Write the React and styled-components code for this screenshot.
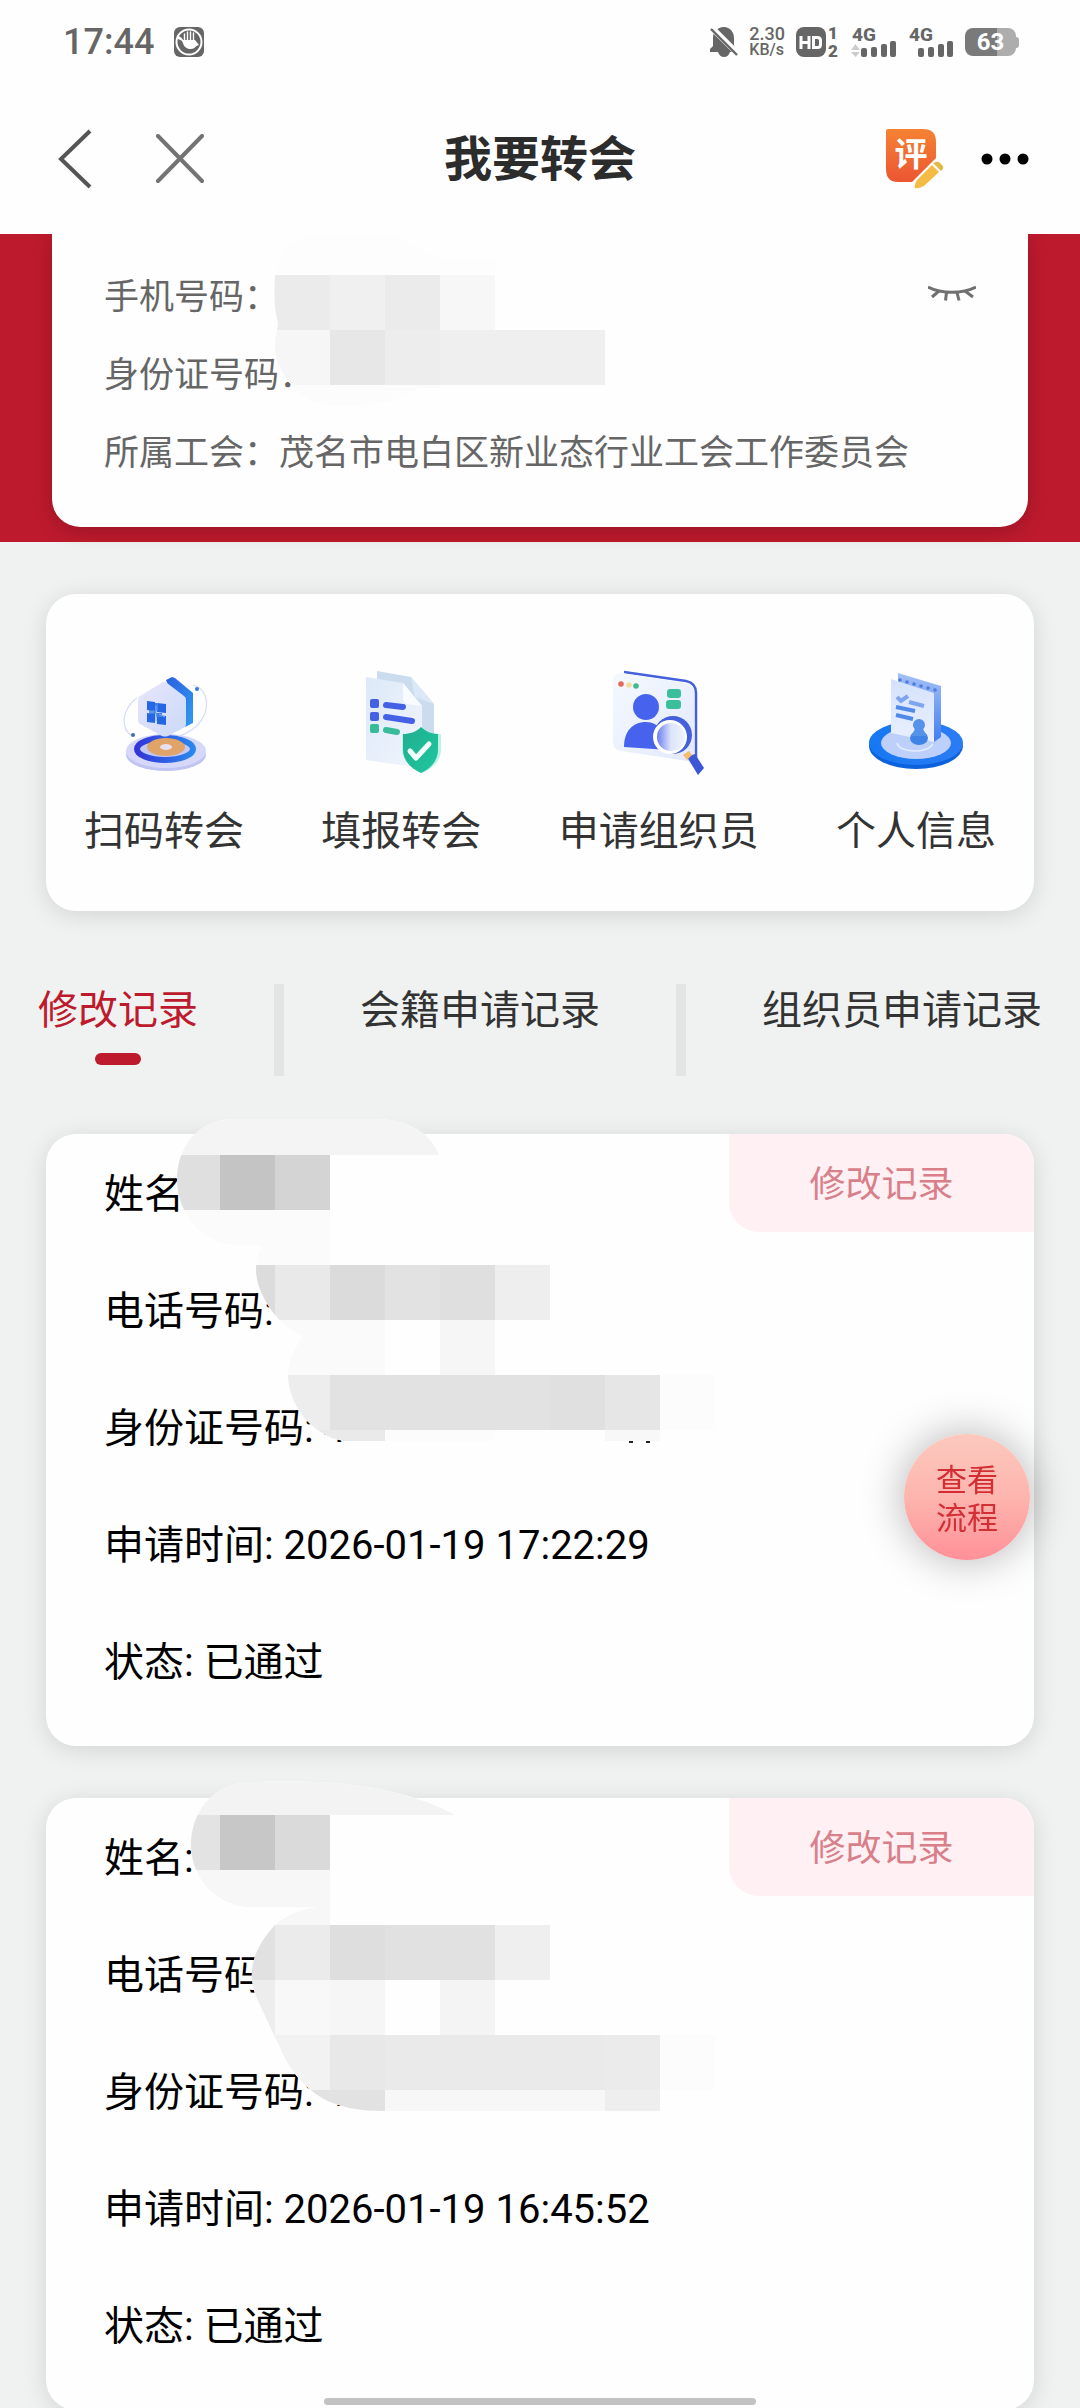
import React, { useState } from "react";
import styled, { createGlobalStyle } from "styled-components";

const colors = {
  brand: "#be1a2d",
  page: "#eff2f1",
  ink: "#333333",
  muted: "#666666",
  status: "#666666",
};

const GlobalStyle = createGlobalStyle`
  * { box-sizing: border-box; }
  body {
    margin: 0;
    background: ${colors.page};
    font-family: Roboto, "Noto Sans CJK SC", sans-serif;
    color: ${colors.ink};
  }
  button {
    font-family: inherit;
    color: inherit;
    background: none;
    border: 0;
    padding: 0;
    cursor: pointer;
  }
  svg { display: block; flex: none; }
`;

const Screen = styled.div`
  display: flex;
  flex-direction: column;
  height: 100vh;
  overflow: hidden;
`;

/* ---------- status bar ---------- */

const StatusBar = styled.div`
  display: flex;
  align-items: center;
  justify-content: space-between;
  flex: none;
  height: 84px;
  padding: 0 61px 0 63px;
  background: #fefefe;
  color: ${colors.status};
`;

const StatusGroup = styled.div`
  display: flex;
  align-items: center;
  gap: ${(p) => p.$gap}px;
`;

const Clock = styled.span`
  font-size: 36px;
  line-height: 44px;
  font-weight: 500;
`;

const NetSpeed = styled.span`
  display: flex;
  flex-direction: column;
  font-weight: 500;
  font-size: 18px;
  line-height: 16px;
  small {
    font-size: 16px;
  }
`;

const Battery = styled.span`
  display: flex;
  align-items: center;
`;

const BatteryBody = styled.span`
  width: 51px;
  height: 28px;
  border-radius: 8px;
  background: linear-gradient(90deg, #7a7a7a 63%, #adadad 63%);
  color: #fff;
  font-size: 24px;
  line-height: 28px;
  font-weight: 700;
  text-align: center;
`;

const BatteryTip = styled.span`
  width: 3px;
  height: 11px;
  border-radius: 0 3px 3px 0;
  background: #adadad;
`;

const PalmIcon = () => (
  <svg width="30" height="30" viewBox="0 0 30 30">
    <rect width="30" height="30" rx="6" fill="#666" />
    <circle cx="15" cy="15" r="12.5" fill="none" stroke="#fff" strokeWidth="2" />
    <path
      d="M10.500 7v9M13.500 5v9M16.500 5v9M19.500 6v9"
      stroke="#fff"
      strokeWidth="1.400"
      strokeLinecap="round"
    />
    <path d="M3 9c3 0 5 2 6 4h12l4 5c-3 0-4 4-8 4-4 0-7-2-8-6-1-3-4-4-6-4z" fill="#fff" />
  </svg>
);

const MutedBellIcon = () => (
  <svg width="28" height="30" viewBox="0 0 28 30">
    <path
      d="M14 0C7 0 3 5 3 11v8l-3 3v3h8c1 3 3 5 6 5s5-2 6-5h5v-4l-1-3v-7C24 5 20 0 14 0z"
      fill="#666"
    />
    <path d="M1 0l27 27" stroke="#fefefe" strokeWidth="6" />
    <path d="M1 2l26 26" stroke="#666" strokeWidth="2.4" />
  </svg>
);

const HdIcon = () => (
  <svg width="44" height="44" viewBox="0 -7 44 44">
    <rect width="30" height="30" rx="8" fill="#666" />
    <g fill="none" stroke="#fff" strokeWidth="3">
      <path d="M5 9v13M13 9v13M5 15.5h8" />
      <path d="M17.500 10.500h4c2 0 3 1 3 3v4c0 2-1 3-3 3h-4z" />
    </g>
    <g fontFamily="Roboto, sans-serif" fontWeight="900" fontSize="17" fill="#666">
      <text x="32" y="12">1</text>
      <text x="32" y="30">2</text>
    </g>
  </svg>
);

const SignalIcon = ({ traffic }) => (
  <svg width="46" height="44" viewBox="0 -7 46 44">
    <text x="1" y="14" fontFamily="Roboto, sans-serif" fontWeight="800" fontSize="19" fill="#666">
      4G
    </text>
    {traffic && <path d="M4.500 17l4.500 6H0zM4.500 30L0 25h9z" fill="#ccc" />}
    <g fill="#666">
      <rect x="10" y="21" width="6" height="9" rx="2" />
      <rect x="20" y="20" width="6" height="10" rx="2" />
      <rect x="30" y="17" width="6" height="13" rx="2" />
      <rect x="39" y="14" width="6" height="16" rx="2" />
    </g>
  </svg>
);

/* ---------- navigation bar ---------- */

const NavBar = styled.header`
  display: grid;
  grid-template-columns: 1fr auto 1fr;
  align-items: center;
  flex: none;
  height: 150px;
  padding: 0 50px;
  background: #fefefe;
`;

const NavSide = styled.div`
  display: flex;
  align-items: center;
  justify-content: ${(p) => (p.$end ? "flex-end" : "flex-start")};
  gap: ${(p) => (p.$end ? 36 : 62)}px;
  padding-left: 6px;
`;

const Title = styled.h1`
  margin: 0;
  font-size: 48px;
  line-height: 60px;
  padding-top: 2px;
  font-weight: 700;
  color: #2c2c2c;
`;

const BackIcon = () => (
  <svg width="36" height="60" viewBox="0 0 36 60" fill="none">
    <path d="M34 2L5 30l29 28" stroke="#555" strokeWidth="4" />
  </svg>
);

const CloseIcon = () => (
  <svg width="50" height="50" viewBox="0 0 50 50" fill="none">
    <path d="M4 2l44 45M48 2L4 47" stroke="#737373" strokeWidth="4" strokeLinecap="round" />
  </svg>
);

const ReviewIcon = () => (
  <svg width="58" height="60" viewBox="0 0 58 60">
    <defs>
      <linearGradient id="review" x1="0" y1="0" x2="0" y2="1">
        <stop offset="0" stopColor="#f58233" />
        <stop offset="1" stopColor="#ec5532" />
      </linearGradient>
    </defs>
    <path d="M0 2q0-2 2-2h35q13 0 13 13v16L26 53H12Q0 53 0 40z" fill="url(#review)" />
    <text
      x="25"
      y="37"
      textAnchor="middle"
      fontFamily='"Noto Sans CJK SC", sans-serif'
      fontWeight="700"
      fontSize="33"
      fill="#fff"
    >
      评
    </text>
    <path d="M46 36l7 7-15 14q-6 3-9 2-1-3 2-8z" fill="#f4bb45" />
    <path d="M47 34l3-1q2-1 4 1l2 2q2 2 1 4l-2 2z" fill="#dfb845" />
  </svg>
);

const MoreIcon = () => (
  <svg width="50" height="20" viewBox="0 0 50 20">
    <circle cx="7" cy="10" r="5.500" />
    <circle cx="25" cy="10" r="5.500" />
    <circle cx="43" cy="10" r="5.500" />
  </svg>
);

/* ---------- content ---------- */

const Content = styled.main`
  flex: 1;
  min-height: 0;
  overflow-y: auto;
  scrollbar-width: none;
`;

const Banner = styled.section`
  padding: 0 52px 15px;
  background: ${colors.brand};
`;

const InfoCard = styled.div`
  position: relative;
  display: flex;
  flex-direction: column;
  gap: 30px;
  padding: 40px 52px 49px;
  border-radius: 0 0 28px 28px;
  background: #fefefe;
  box-shadow: 0 4px 20px rgba(0, 0, 0, 0.2);
`;

const InfoRow = styled.div`
  display: flex;
  align-items: flex-start;
  justify-content: space-between;
  font-size: 35px;
  line-height: 48px;
  color: ${colors.muted};
`;

const ClosedEyeIcon = () => (
  <svg width="48" height="30" viewBox="0 -8 48 30" fill="none" stroke="#707070" strokeWidth="3">
    <path d="M0 5c14 7 34 7 48 0M11 9l-7 6M37 9l8 6M18.500 10.500l-1 8M29 10.500l2 8" />
  </svg>
);

const Card = styled.section`
  position: relative;
  margin: 0 46px;
  border-radius: 30px;
  background: #fefefe;
  box-shadow: 0 4px 24px rgba(0, 0, 0, 0.12);
`;

const ShortcutCard = styled(Card)`
  display: flex;
  justify-content: space-between;
  margin-top: 52px;
  padding: 73px 38px 55px;
`;

const Shortcut = styled.button`
  display: flex;
  flex-direction: column;
  align-items: center;
  gap: 31px;
  font-size: 40px;
  line-height: 48px;
`;

const ScanIcon = () => (
  <svg width="110" height="110" viewBox="0 0 110 110">
    <defs>
      <linearGradient id="scanBack" x1="0" y1="0" x2="1" y2="1">
        <stop offset="0" stopColor="#2b5fe0" />
        <stop offset="1" stopColor="#2f9cf0" />
      </linearGradient>
      <linearGradient id="scanFace" x1="0" y1="0" x2="1" y2="1">
        <stop offset="0" stopColor="#e9e6fc" />
        <stop offset="1" stopColor="#c9d9f8" />
      </linearGradient>
      <linearGradient id="scanRing" x1="0" y1="0" x2="1" y2="0">
        <stop offset="0" stopColor="#3335d8" />
        <stop offset="1" stopColor="#2a86ee" />
      </linearGradient>
    </defs>
    <ellipse cx="57" cy="88" rx="40" ry="16" fill="#bfc4f3" />
    <ellipse cx="57" cy="84" rx="40" ry="17" fill="#d6d8fa" />
    <ellipse cx="56" cy="82" rx="28" ry="11" fill="#c2c9f6" stroke="url(#scanRing)" strokeWidth="6" />
    <ellipse cx="57" cy="80" rx="19" ry="9" fill="#e0a468" />
    <ellipse cx="57" cy="80" rx="6" ry="3" fill="#e8dff2" />
    <path
      d="M28 31C18 38 13 50 16 60c1 4 4 7 8 9M84 18c12 3 16 16 12 28-4 11-14 19-26 23"
      fill="none"
      stroke="#d5dcf6"
      strokeWidth="1.200"
    />
    <circle cx="88" cy="22" r="2" fill="#3a7ad0" />
    <circle cx="24" cy="68" r="2" fill="#3a6ab8" />
    <path d="M57 13l6-3 3 1 18 15v30l-8 4z" fill="url(#scanBack)" />
    <path d="M54 15q2-1 4 1l17 13q2 1 2 4v24q0 3-3 4l-15 8q-3 1-6 0L31 57q-2-1-2-4V33q0-3 2-4z" fill="url(#scanFace)" />
    <path d="M38 34l8 1v9l-8-1zM48 36l9 1v9l-9-1zM38 46l8 1v9l-8-1zM48 48l9 1v9l-9-1z" fill="#2466e6" />
    <path d="M46 36h3v8h-3zM40 43h7v4h-7zM47 46h6v4h-6z" fill="#3f7fe8" />
    <path d="M40 45h5M47 39v15M50 47l6 3" stroke="#7fb0f5" strokeWidth="1" />
  </svg>
);

const ReportIcon = () => (
  <svg width="110" height="110" viewBox="0 0 110 110">
    <defs>
      <linearGradient id="reportPage" x1="0" y1="0" x2="1" y2="1">
        <stop offset="0" stopColor="#dde9f8" />
        <stop offset="1" stopColor="#f1f5fd" />
      </linearGradient>
      <linearGradient id="reportShield" x1="0" y1="0" x2="1" y2="1">
        <stop offset="0" stopColor="#1fae8f" />
        <stop offset="1" stopColor="#1fc79f" />
      </linearGradient>
    </defs>
    <path d="M31 4l34 6 23 27v44l-57-9z" fill="#cbdcef" />
    <path d="M65 10l4 20 19 7z" fill="#dbe8f7" />
    <path d="M20 10l37 6 19 23v62l-56-8z" fill="url(#reportPage)" />
    <path d="M57 16v16q0 4 4 5l15 2z" fill="#f8fbff" />
    <g fill="#4461e6">
      <rect x="24" y="32" width="9" height="9" rx="2" />
      <rect x="24" y="45" width="9" height="9" rx="2" />
    </g>
    <rect x="24" y="57" width="9" height="9" rx="2" fill="#37bb99" />
    <g strokeWidth="6" strokeLinecap="round">
      <path d="M40 38l17 2M40 50l26 4" stroke="#4461e6" />
      <path d="M40 63l11 2" stroke="#37bb99" />
    </g>
    <path d="M76 60c6 5 12 7 19 7v16c0 11-9 19-19 23-10-4-20-12-20-23V67c8 0 14-2 20-7z" fill="#bdf3e5" />
    <path d="M75 60c6 5 11 7 17 7v16c0 11-8 19-17 23-9-4-18-12-18-23V67c7 0 13-2 18-7z" fill="url(#reportShield)" />
    <path d="M64 84l6 7 13-14" fill="none" stroke="#f3fffb" strokeWidth="5" strokeLinecap="round" strokeLinejoin="round" />
  </svg>
);

const OrganizerIcon = () => (
  <svg width="110" height="110" viewBox="0 0 110 110">
    <defs>
      <linearGradient id="orgPanel" x1="0" y1="0" x2="1" y2="1">
        <stop offset="0" stopColor="#f4f9ff" />
        <stop offset="1" stopColor="#e3e9fb" />
      </linearGradient>
      <linearGradient id="orgLens" x1="0" y1="0" x2="1" y2="0">
        <stop offset="0" stopColor="#6b7df0" />
        <stop offset="0.500" stopColor="#dde5fb" />
        <stop offset="1" stopColor="#eef3ff" />
      </linearGradient>
    </defs>
    <path d="M20 5l62 9q10 2 10 12v66" fill="none" stroke="#4560dc" strokeWidth="2.500" />
    <path d="M9 13q0-7 8-7l64 10q9 2 9 10v69L17 84q-8-1-8-9z" fill="url(#orgPanel)" />
    <circle cx="17" cy="17" r="2.800" fill="#e5685c" />
    <circle cx="25" cy="18" r="2.800" fill="#f5dc98" />
    <circle cx="32" cy="19" r="2.800" fill="#42b98e" />
    <rect x="63" y="22" width="14" height="9" rx="3" fill="#3abf9a" />
    <rect x="62" y="33" width="15" height="9" rx="3" fill="#3abf9a" />
    <circle cx="42" cy="40" r="13" fill="#4763ee" />
    <path d="M20 80c0-15 8-25 22-25 13 0 22 12 23 28z" fill="#4763ee" />
    <path d="M83 90l8-3 9 14-6 7z" fill="#3c56d8" />
    <path d="M79 88l6-4 3 4-5 5z" fill="#f3bd6a" />
    <circle cx="69" cy="68" r="19" fill="#4560dc" />
    <circle cx="66" cy="70" r="17" fill="#fff" />
    <circle cx="67" cy="70" r="14" fill="url(#orgLens)" />
  </svg>
);

const ProfileIcon = () => (
  <svg width="110" height="110" viewBox="0 0 110 110">
    <defs>
      <linearGradient id="proDisc" x1="0" y1="0" x2="1" y2="0">
        <stop offset="0" stopColor="#1578f2" />
        <stop offset="1" stopColor="#2b7cf5" />
      </linearGradient>
      <linearGradient id="proSide" x1="0" y1="0" x2="0" y2="1">
        <stop offset="0" stopColor="#a5c0f6" />
        <stop offset="1" stopColor="#3f7df0" />
      </linearGradient>
      <linearGradient id="proPage" x1="0" y1="0" x2="0" y2="1">
        <stop offset="0" stopColor="#d5e2fc" />
        <stop offset="1" stopColor="#eaf0ff" />
      </linearGradient>
    </defs>
    <ellipse cx="55" cy="79" rx="47" ry="23" fill="#0d62dc" />
    <ellipse cx="55" cy="76" rx="47" ry="22" fill="url(#proDisc)" />
    <ellipse cx="55" cy="76" rx="35" ry="16" fill="#bcd0fb" />
    <path d="M36 76c2 10 30 11 36 1" fill="none" stroke="#e4ecff" strokeWidth="1.500" />
    <path d="M37 6l43 13v51l-7 5-36-40z" fill="url(#proSide)" />
    <path d="M30 12l43 14v49l-43-9z" fill="url(#proPage)" />
    <g fill="#4a7ddc">
      <circle cx="39" cy="13" r="1.800" />
      <circle cx="46" cy="15" r="1.800" />
      <circle cx="53" cy="17" r="1.800" />
      <circle cx="60" cy="19" r="1.800" />
      <circle cx="67" cy="21" r="1.800" />
      <circle cx="74" cy="23" r="1.800" />
    </g>
    <g fill="none" stroke="#7ea6ee" strokeWidth="4">
      <path d="M36 30l4 4 7-5" />
      <path d="M48 35l15 4" />
      <path d="M35 40l19 4M35 48l17 4" stroke="#4f8ae8" />
    </g>
    <ellipse cx="58" cy="71" rx="9" ry="7" fill="#3f83e6" />
    <path d="M54 62h8l4 7H50z" fill="#5592ea" />
    <circle cx="58" cy="58" r="6" fill="#5592ea" />
  </svg>
);

/* ---------- tabs ---------- */

const Tabs = styled.nav`
  display: flex;
  align-items: flex-start;
  justify-content: space-between;
  margin: 73px 38px 58px;
`;

const Tab = styled.button`
  display: flex;
  flex-direction: column;
  align-items: center;
  gap: 16px;
  font-size: 40px;
  line-height: 53px;
  white-space: nowrap;
  color: ${(p) => (p.$active ? colors.brand : colors.ink)};
  &::after {
    content: "";
    width: 46px;
    height: 12px;
    border-radius: 6px;
    background: ${(p) => (p.$active ? colors.brand : "transparent")};
  }
`;

const Divider = styled.span`
  width: 10px;
  height: 92px;
  background: #e4e4e4;
`;

/* ---------- records ---------- */

const RecordList = styled.div`
  display: flex;
  flex-direction: column;
  gap: 52px;
`;

const RecordCard = styled(Card)`
  display: flex;
  flex-direction: column;
  gap: 59px;
  padding: 32px 58px 54px;
  font-size: 40px;
  line-height: 58px;
  color: #000;
`;

const RecordTag = styled.span`
  position: absolute;
  top: 0;
  right: 0;
  width: 305px;
  height: 98px;
  border-radius: 0 30px 0 30px;
  background: #fff1f3;
  color: #d87f8a;
  font-size: 36px;
  line-height: 102px;
  text-align: center;
`;

const MaskLayer = styled.svg`
  position: absolute;
  left: ${(p) => p.$left}px;
  top: ${(p) => p.$top}px;
  pointer-events: none;
`;

/* Pixelated cover for private values: rows of [x, width, colour] inside a brush outline. */
const CELL = 55;

function Mask({ id, left, top, x, y, width, height, outline, rows, specks = [] }) {
  return (
    <MaskLayer
      $left={left}
      $top={top}
      width={width}
      height={height}
      viewBox={`${x} ${y} ${width} ${height}`}
      aria-hidden="true"
    >
      <clipPath id={id}>
        <path d={outline} />
      </clipPath>
      <g clipPath={`url(#${id})`} shapeRendering="crispEdges">
        <rect x={x} y={y} width={width} height={height} fill="#fefefe" />
        {rows.map(([rowY, cells]) =>
          cells.map(([cellX, span, fill]) => (
            <rect
              key={`${rowY}-${cellX}`}
              x={cellX}
              y={rowY}
              width={span * CELL}
              height={CELL}
              fill={fill}
            />
          ))
        )}
      </g>
      {specks.map(([sx, sy]) => (
        <rect key={sx} x={sx} y={sy} width="4" height="2" fill="#222" />
      ))}
    </MaskLayer>
  );
}

const infoMask = {
  id: "mask-info",
  left: 218,
  top: 0,
  x: 270,
  y: 234,
  width: 400,
  height: 176,
  outline:
    "M275 275C280 255 290 234 320 234H390C410 240 430 260 450 260H495V330H605V385H661V388H420C400 402 370 407 330 405C310 404 296 393 288 380C278 368 274 355 275 340C276 334 278 328 278 322C274 310 274 290 275 275Z",
  rows: [
    [220, [[220, 5, "#fdfdfd"]]],
    [275, [[220, 2, "#ebebeb"], [330, 1, "#f0f0f0"], [385, 1, "#ebebeb"], [440, 1, "#f7f7f7"]]],
    [330, [[220, 2, "#f6f6f6"], [330, 1, "#e7e7e7"], [385, 1, "#ededed"], [440, 3, "#efefef"]]],
    [385, [[275, 3, "#fcfcfc"]]],
  ],
};

const firstMask = {
  id: "mask-first",
  left: 119,
  top: -34,
  x: 165,
  y: 1100,
  width: 560,
  height: 345,
  outline:
    "M177 1180C177 1150 195 1119 235 1119H375C410 1119 432 1135 439 1155H720V1441H348C320 1441 288 1410 288 1375C288 1362 295 1347 303 1336C280 1328 256 1295 256 1270C256 1260 259 1250 263 1245H235C205 1245 177 1215 177 1180Z",
  rows: [
    [1100, [[165, 5, "#f4f4f4"]]],
    [1155, [[165, 1, "#dfdfdf"], [220, 1, "#c4c4c4"], [275, 1, "#d4d4d4"]]],
    [1210, [[165, 3, "#fbfbfb"]]],
    [1265, [[220, 1, "#dcdcdc"], [275, 1, "#e9e9e9"], [330, 1, "#dbdbdb"], [385, 1, "#e2e2e2"], [440, 1, "#dfdfdf"], [495, 1, "#eeeeee"]]],
    [1320, [[275, 2, "#fafafa"], [440, 1, "#f6f6f6"]]],
    [1375, [[275, 1, "#ededed"], [330, 4, "#e2e2e2"], [550, 1, "#e0e0e0"], [605, 1, "#e6e6e6"], [660, 1, "#fcfcfc"]]],
    [1430, [[275, 2, "#eaeaea"], [385, 2, "#fcfcfc"], [605, 1, "#f8f8f8"]]],
  ],
  specks: [[629, 1441], [646, 1441]],
};

const secondMask = {
  id: "mask-second",
  left: 119,
  top: -28,
  x: 165,
  y: 1770,
  width: 560,
  height: 345,
  outline:
    "M191 1845C191 1815 210 1782 254 1782C330 1779 400 1785 455 1815H720V2111H384C360 2111 345 2108 330 2102C310 2093 292 2075 282 2052L259 2003C245 1975 252 1950 275 1925C288 1914 300 1910 317 1907H245C212 1902 191 1875 191 1845Z",
  rows: [
    [1760, [[165, 6, "#f3f3f3"]]],
    [1815, [[165, 1, "#e3e3e3"], [220, 1, "#c7c7c7"], [275, 1, "#dadada"]]],
    [1870, [[165, 3, "#f7f7f7"]]],
    [1925, [[220, 1, "#e1e1e1"], [275, 1, "#ebebeb"], [330, 1, "#dedede"], [385, 2, "#e1e1e1"], [495, 1, "#efefef"]]],
    [1980, [[220, 1, "#ededed"], [275, 1, "#f8f8f8"], [330, 1, "#f6f6f6"], [440, 1, "#f4f4f4"]]],
    [2035, [[220, 2, "#f2f2f2"], [330, 1, "#e8e8e8"], [385, 4, "#eaeaea"], [605, 1, "#ebebeb"], [660, 1, "#fcfcfc"]]],
    [2090, [[275, 2, "#e2e2e2"], [385, 4, "#f7f7f7"], [605, 1, "#eeeeee"]]],
  ],
};

/* ---------- overlays ---------- */

const FlowButton = styled.button`
  position: fixed;
  right: 50px;
  top: 1434px;
  width: 126px;
  height: 126px;
  padding: 6px 31px 0;
  border-radius: 50%;
  background: linear-gradient(#fcc9be, #fdb5ae 50%, #ff9098);
  box-shadow: 0 0 44px rgba(0, 0, 0, 0.3);
  color: #d42e35;
  font-size: 31px;
  line-height: 38px;
`;

const HomeIndicator = styled.div`
  position: fixed;
  left: 30%;
  right: 30%;
  bottom: 3px;
  height: 7px;
  border-radius: 4px;
  background: #c2c2c2;
`;

const shortcuts = [
  { label: "扫码转会", Icon: ScanIcon },
  { label: "填报转会", Icon: ReportIcon },
  { label: "申请组织员", Icon: OrganizerIcon },
  { label: "个人信息", Icon: ProfileIcon },
];

const tabs = ["修改记录", "会籍申请记录", "组织员申请记录"];

const records = [
  { time: "2026-01-19 17:22:29", mask: firstMask },
  { time: "2026-01-19 16:45:52", mask: secondMask },
];

export default function App() {
  const [active, setActive] = useState(0);

  return (
    <>
      <GlobalStyle />
      <Screen>
        <StatusBar>
          <StatusGroup $gap={20}>
            <Clock>17:44</Clock>
            <PalmIcon />
          </StatusGroup>
          <StatusGroup $gap={11}>
            <MutedBellIcon />
            <NetSpeed>
              2.30
              <small>KB/s</small>
            </NetSpeed>
            <HdIcon />
            <SignalIcon traffic />
            <SignalIcon />
            <Battery>
              <BatteryBody>63</BatteryBody>
              <BatteryTip />
            </Battery>
          </StatusGroup>
        </StatusBar>

        <NavBar>
          <NavSide>
            <button type="button" aria-label="返回">
              <BackIcon />
            </button>
            <button type="button" aria-label="关闭">
              <CloseIcon />
            </button>
          </NavSide>
          <Title>我要转会</Title>
          <NavSide $end>
            <button type="button" aria-label="评价">
              <ReviewIcon />
            </button>
            <button type="button" aria-label="更多">
              <MoreIcon />
            </button>
          </NavSide>
        </NavBar>

        <Content>
          <Banner>
            <InfoCard>
              <InfoRow>
                <span>手机号码：</span>
                <button type="button" aria-label="显示信息">
                  <ClosedEyeIcon />
                </button>
              </InfoRow>
              <InfoRow>身份证号码：</InfoRow>
              <InfoRow>所属工会：茂名市电白区新业态行业工会工作委员会</InfoRow>
              <Mask {...infoMask} />
            </InfoCard>
          </Banner>

          <ShortcutCard>
            {shortcuts.map(({ label, Icon }) => (
              <Shortcut type="button" key={label}>
                <Icon />
                {label}
              </Shortcut>
            ))}
          </ShortcutCard>

          <Tabs>
            {tabs.map((label, i) => (
              <React.Fragment key={label}>
                {i > 0 && <Divider />}
                <Tab type="button" $active={i === active} onClick={() => setActive(i)}>
                  {label}
                </Tab>
              </React.Fragment>
            ))}
          </Tabs>

          <RecordList>
            {records.map(({ time, mask }) => (
              <RecordCard key={time}>
                <div>姓名:</div>
                <div>电话号码:</div>
                <div>身份证号码: 4</div>
                <div>申请时间: {time}</div>
                <div>状态: 已通过</div>
                <RecordTag>修改记录</RecordTag>
                <Mask {...mask} />
              </RecordCard>
            ))}
          </RecordList>
        </Content>
      </Screen>
      <FlowButton type="button">查看流程</FlowButton>
      <HomeIndicator />
    </>
  );
}
